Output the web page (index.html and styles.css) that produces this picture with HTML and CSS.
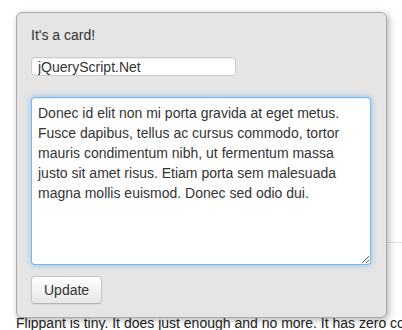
FILE: index.html
```html
<!DOCTYPE html>
<html lang="en">
<head>
    <meta charset="UTF-8">
    <meta name="viewport" content="width=device-width, initial-scale=1.0">
    <title>Flippant card</title>
    <link rel="stylesheet" href="styles.css">
</head>
<body>
    <div class="page">
        <hr class="divider">
        <p class="intro">Flippant is tiny. It does just enough and no more. It has zero code dependencies and works everywhere.</p>
    </div>

    <div class="card">
        <p class="card-title">It's a card!</p>
        <input type="text" class="field" value="jQueryScript.Net">
        <textarea class="note">Donec id elit non mi porta gravida at eget metus. Fusce dapibus, tellus ac cursus commodo, tortor mauris condimentum nibh, ut fermentum massa justo sit amet risus. Etiam porta sem malesuada magna mollis euismod. Donec sed odio dui.</textarea>
        <button class="btn">Update</button>
    </div>
</body>
</html>
```

FILE: styles.css
```css
body {
    margin: 0;
    font-family: "Liberation Sans", Arial, sans-serif;
    font-size: 14px;
    line-height: 20px;
    color: #333;
    background-color: #fff;
    overflow: hidden;
}

.page {
    width: 700px;
    padding: 242px 0 0 16px;
}

.divider {
    margin: 0 0 70px;
    border: 0;
    border-top: 1px solid #e3e3e3;
}

.intro {
    margin: 0;
    color: #222;
}

.card {
    position: absolute;
    left: 16px;
    top: 12px;
    width: 341px;
    height: 280px;
    padding: 12px 14px;
    background-color: #e5e5e5;
    border: 1px solid #a9a9a9;
    border-radius: 6px;
    box-shadow: 2px 2px 7px rgba(0,0,0,0.3);
}

.card-title {
    margin: 0 0 12px;
}

.field {
    display: block;
    box-sizing: border-box;
    width: 205px;
    height: 19px;
    margin: 0 0 21px;
    padding: 0 6px;
    font-family: inherit;
    font-size: 14px;
    color: #333;
    background-color: #fff;
    border: 1px solid #ccc;
    border-radius: 4px;
    box-shadow: inset 0 1px 1px rgba(0,0,0,0.075);
    outline: none;
}

.note {
    display: block;
    box-sizing: border-box;
    width: 340px;
    height: 168px;
    margin: 0 0 11px;
    padding: 5px 6px;
    font-family: inherit;
    font-size: 14px;
    line-height: 20px;
    color: #333;
    background-color: #fff;
    border: 1px solid rgba(82,168,236,0.8);
    border-radius: 4px;
    box-shadow: inset 0 1px 1px rgba(0,0,0,0.075), 0 0 6px rgba(82,168,236,0.6);
    outline: none;
}

.btn {
    display: block;
    height: 28px;
    padding: 3px 12px;
    font-family: inherit;
    font-size: 14px;
    line-height: 20px;
    color: #333;
    background-color: #f5f5f5;
    background-image: linear-gradient(to bottom, #fff, #e6e6e6);
    border: 1px solid #c5c5c5;
    border-bottom-color: #b3b3b3;
    border-radius: 4px;
    box-shadow: inset 0 1px 0 rgba(255,255,255,0.2), 0 1px 2px rgba(0,0,0,0.05);
}
```
